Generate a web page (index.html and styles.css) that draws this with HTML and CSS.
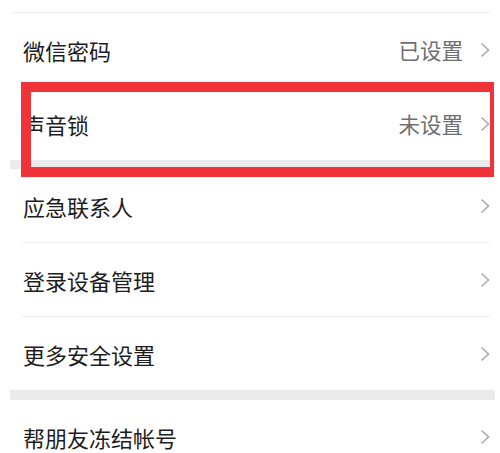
FILE: index.html
```html
<!DOCTYPE html>
<html lang="zh-CN">
<head>
<meta charset="utf-8">
<link rel="stylesheet" href="styles.css">
</head>
<body>
<div class="page">
  <div class="group group-first">
    <div class="row">
      <span class="label">微信密码</span>
      <span class="right"><span class="value">已设置</span><svg class="chev" viewBox="0 0 10 16"><path d="M1.5 1.5 L8.5 8 L1.5 14.5"/></svg></span>
    </div>
    <div class="row">
      <span class="label">声音锁</span>
      <span class="right"><span class="value">未设置</span><svg class="chev" viewBox="0 0 10 16"><path d="M1.5 1.5 L8.5 8 L1.5 14.5"/></svg></span>
    </div>
  </div>
  <div class="gap"></div>
  <div class="group">
    <div class="row">
      <span class="label">应急联系人</span>
      <span class="right"><svg class="chev" viewBox="0 0 10 16"><path d="M1.5 1.5 L8.5 8 L1.5 14.5"/></svg></span>
    </div>
    <div class="row">
      <span class="label">登录设备管理</span>
      <span class="right"><svg class="chev" viewBox="0 0 10 16"><path d="M1.5 1.5 L8.5 8 L1.5 14.5"/></svg></span>
    </div>
    <div class="row">
      <span class="label">更多安全设置</span>
      <span class="right"><svg class="chev" viewBox="0 0 10 16"><path d="M1.5 1.5 L8.5 8 L1.5 14.5"/></svg></span>
    </div>
  </div>
  <div class="gap gap-wide"></div>
  <div class="group">
    <div class="row">
      <span class="label">帮朋友冻结帐号</span>
      <span class="right"><svg class="chev" viewBox="0 0 10 16"><path d="M1.5 1.5 L8.5 8 L1.5 14.5"/></svg></span>
    </div>
  </div>
  <div class="highlight"></div>
</div>
</body>
</html>
```
FILE: styles.css
```css
html, body {
  margin: 0;
  padding: 0;
  background: #ffffff;
}
body {
  width: 500px;
  height: 453px;
  overflow: hidden;
  font-family: "Noto Sans CJK SC", "Noto Sans", sans-serif;
}
.page {
  position: relative;
  padding-top: 12px;
}
.group-first {
  border-top: 1px solid #efefef;
  margin-left: 12px;
  margin-right: 10px;
}
.group-first .row {
  margin-left: 10px;
  margin-right: 0;
}
.row {
  height: 73px;
  margin: 0 10px 0 22px;
  display: flex;
  align-items: center;
  justify-content: space-between;
  border-top: 1px solid #efefef;
  box-sizing: border-box;
}
.group .row:first-child {
  border-top: none;
  height: 73px;
}
.group .row + .row {
  height: 74px;
}
.label {
  font-size: 22px;
  color: #1c1c1c;
  line-height: 1;
  margin-left: 1px;
}
.right {
  display: flex;
  align-items: center;
  gap: 17px;
}
.value {
  font-size: 21.5px;
  color: #6f6f6f;
  line-height: 1;
}
.chev {
  width: 10px;
  height: 16px;
  fill: none;
  stroke: #ababab;
  stroke-width: 1.6;
}
.gap {
  height: 9px;
  background: #ebebeb;
  margin: 0 5px 0 10px;
}
.gap-wide {
  height: 10px;
}
.highlight {
  position: absolute;
  left: 21px;
  top: 82px;
  width: 473px;
  height: 95px;
  box-sizing: border-box;
  border: 10px solid #ef3339;
  border-right-width: 4px;
}
```
